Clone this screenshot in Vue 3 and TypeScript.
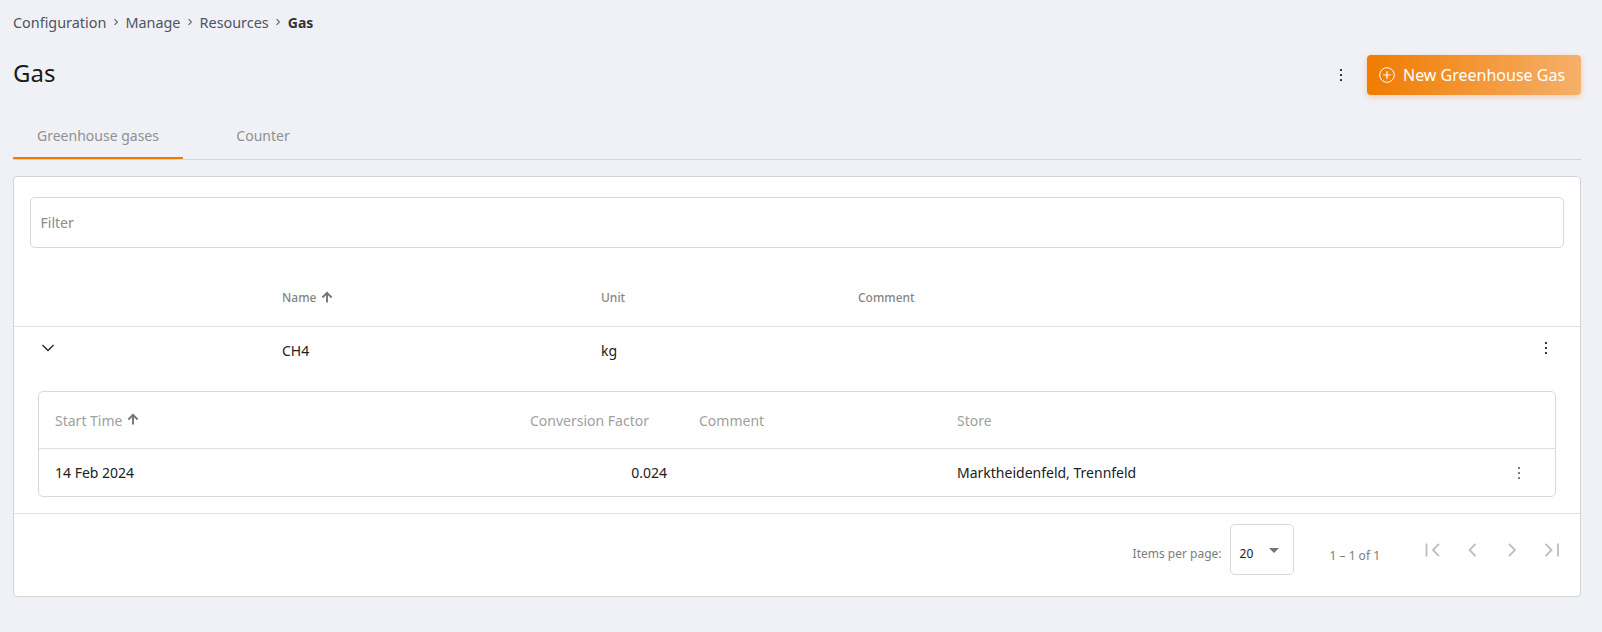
<script setup lang="ts">
const crumbs: string[] = ['Configuration', 'Manage', 'Resources']
</script>

<template>
  <div class="page">
    <nav class="crumbs">
      <template v-for="c in crumbs" :key="c">
        <span>{{ c }}</span>
        <svg class="sep" width="12" height="12" viewBox="0 0 12 12"><path d="M4.6 3.2 7.4 6 4.6 8.8" fill="none" stroke="#5f6368" stroke-width="1.1" /></svg>
      </template>
      <b>Gas</b>
    </nav>

    <header class="head">
      <h1>Gas</h1>
      <div class="actions">
        <svg class="kebab" width="4" height="12" viewBox="0 0 4 12"><g fill="#2b2b2b"><rect x="1" y="0" width="2" height="2" rx=".5" /><rect x="1" y="5" width="2" height="2" rx=".5" /><rect x="1" y="10" width="2" height="2" rx=".5" /></g></svg>
        <button class="new">
          <svg width="16" height="16" viewBox="0 0 16 16" fill="none" stroke="#fff" stroke-width="1"><circle cx="8" cy="8" r="7.3" /><path d="M8 4.2v7.6M4.2 8h7.6" stroke-width="1.2" /></svg>
          <span>New Greenhouse Gas</span>
        </button>
      </div>
    </header>

    <div class="tabs">
      <div class="tab active">Greenhouse gases</div>
      <div class="tab">Counter</div>
    </div>

    <section class="card">
      <div class="filter-wrap"><div class="filter">Filter</div></div>

      <div class="row thead">
        <div class="c-exp"></div>
        <div class="c-name">Name
          <svg class="sort" width="12" height="12" viewBox="0 0 12 12"><path d="M6 11.5V2M1.4 6.5 6 1.9l4.6 4.6" fill="none" stroke="#757575" stroke-width="1.9" /></svg>
        </div>
        <div class="c-unit">Unit</div>
        <div class="c-comment">Comment</div>
      </div>

      <div class="row tbody">
        <div class="c-exp"><svg class="chev" width="14" height="8" viewBox="0 0 14 8"><path d="M1.5 1 7 6.5 12.5 1" fill="none" stroke="#222" stroke-width="1.3" /></svg></div>
        <div class="c-name">CH4</div>
        <div class="c-unit">kg</div>
        <div class="c-comment"></div>
        <svg class="kebab row-menu" width="4" height="12" viewBox="0 0 4 12"><g fill="#2b2b2b"><rect x="1" y="0" width="2" height="2" rx=".5" /><rect x="1" y="5" width="2" height="2" rx=".5" /><rect x="1" y="10" width="2" height="2" rx=".5" /></g></svg>
      </div>

      <div class="detail-wrap">
        <div class="detail">
          <div class="drow dhead">
            <div class="d-start">Start Time
              <svg class="sort" width="12" height="12" viewBox="0 0 12 12"><path d="M6 11.5V2M1.4 6.5 6 1.9l4.6 4.6" fill="none" stroke="#757575" stroke-width="1.9" /></svg>
            </div>
            <div class="d-factor">Conversion Factor</div>
            <div class="d-comment">Comment</div>
            <div class="d-store">Store</div>
          </div>
          <div class="drow dbody">
            <div class="d-start">14 Feb 2024</div>
            <div class="d-factor val">0.024</div>
            <div class="d-comment"></div>
            <div class="d-store">Marktheidenfeld, Trennfeld</div>
            <svg class="kebab d-menu" width="4" height="12" viewBox="0 0 4 12"><g fill="#757575"><rect x="1" y="0" width="2" height="2" rx=".5" /><rect x="1" y="5" width="2" height="2" rx=".5" /><rect x="1" y="10" width="2" height="2" rx=".5" /></g></svg>
          </div>
        </div>
      </div>

      <footer class="pager">
        <span class="ipp">Items per page:</span>
        <div class="select"><span>20</span><i class="caret"></i></div>
        <span class="range">1 – 1 of 1</span>
        <div class="nav">
          <svg width="16" height="16" viewBox="0 0 16 16"><path d="M2.5 1.5v13M15 1.8 9 8l6 6.2" fill="none" stroke="#bdbdbd" stroke-width="1.8" /></svg>
          <svg width="16" height="16" viewBox="0 0 16 16"><path d="M11.5 1.8 5.5 8l6 6.2" fill="none" stroke="#bdbdbd" stroke-width="1.8" /></svg>
          <svg width="16" height="16" viewBox="0 0 16 16"><path d="M5 1.8 11 8l-6 6.2" fill="none" stroke="#bdbdbd" stroke-width="1.8" /></svg>
          <svg width="16" height="16" viewBox="0 0 16 16"><path d="M1.5 1.8 7.5 8l-6 6.2M14 1.5v13" fill="none" stroke="#bdbdbd" stroke-width="1.8" /></svg>
        </div>
      </footer>
    </section>
  </div>
</template>

<style>
html, body { margin: 0; background: #f0f1f7; }
</style>

<style scoped>
* { box-sizing: border-box; }
.page {
  width: 1602px;
  height: 632px;
  overflow: hidden;
  padding: 0 21px 0 13px;
  background: #f0f1f7;
  font-family: "Noto Sans", sans-serif;
  font-size: 14px;
  color: #212121;
}
.crumbs {
  display: flex;
  align-items: center;
  height: 44px;
  color: #4d5361;
  font-size: 14.4px;
}
.crumbs .sep { margin: 0 3.7px 0 3.4px; }
.crumbs b { font-weight: 700; color: #333; font-size: 14px; }
.head {
  display: flex;
  align-items: center;
  justify-content: space-between;
  height: 57px;
}
.head h1 {
  margin: 0;
  font-size: 24px;
  font-weight: 400;
  color: #1c1c1c;
}
.actions { display: flex; align-items: center; gap: 24px; padding-top: 5px; }
.kebab { display: block; }
.new {
  display: flex;
  align-items: center;
  gap: 8px;
  width: 214px;
  height: 40px;
  padding: 0 0 0 12px;
  border: 0;
  border-radius: 4px;
  background: linear-gradient(90deg, #f07c00, #f6b06a);
  color: #fff;
  font: 400 16px "Noto Sans", sans-serif;
  box-shadow: 0 2px 6px rgba(240, 124, 0, .3);
}
.tabs {
  display: flex;
  height: 59px;
  padding-top: 10px;
  border-bottom: 1px solid #d3d4da;
}
.tab {
  display: flex;
  align-items: center;
  justify-content: center;
  height: 48px;
  width: 170px;
  padding-top: 2px;
  border-bottom: 2px solid transparent;
  color: #909090;
  font-size: 14px;
}
.tab.active { border-bottom-color: #f07c00; }
.tab:not(.active) { width: 160px; }
.card {
  margin-top: 16px;
  height: 421px;
  background: #fff;
  border: 1px solid #d3d4da;
  border-radius: 4px;
}
.filter-wrap { padding: 20px 16px 0; }
.filter {
  height: 51px;
  display: flex;
  align-items: center;
  padding-left: 9.5px;
  border: 1px solid #d9d9d9;
  border-radius: 5px;
  color: #8a8a8a;
  font-size: 14px;
}
.row { position: relative; display: flex; }
.thead {
  margin-top: 21px;
  height: 58px;
  align-items: center;
  border-bottom: 1px solid #e0e0e0;
  color: #858585;
  font-size: 12px;
  font-weight: 500;
}
.sort { margin-bottom: 2px; }
.c-exp { width: 268px; padding-left: 27px; }
.c-name { width: 319px; display: flex; align-items: center; gap: 5px; align-self: flex-start; }
.thead .c-name { align-self: center; }
.c-unit { width: 257px; }
.c-comment { flex: 1; }
.tbody { height: 64px; padding-top: 14px; font-size: 14px; }
.tbody .c-exp { padding-top: 3px; }
.chev { display: block; }
.row-menu { position: absolute; right: 32px; top: 15px; }
.detail-wrap { padding: 0 24px 16px; }
.detail {
  border: 1px solid #d9d9d9;
  border-radius: 5px;
}
.drow { position: relative; display: flex; align-items: center; }
.dhead { height: 57px; border-bottom: 1px solid #e0e0e0; color: #a0a0a0; }
.dbody { height: 47px; color: #212121; }
.d-start { width: 475px; padding-left: 16px; display: flex; align-items: center; gap: 5px; flex: none; }
.d-factor { width: 135px; text-align: right; white-space: nowrap; flex: none; }
.d-factor.val { transform: translateX(18px); }
.d-comment { width: 258px; margin-left: 50px; flex: none; }
.d-store { flex: 1; }
.d-menu { position: absolute; right: 34px; top: 18px; }
.pager {
  display: flex;
  align-items: flex-start;
  justify-content: flex-end;
  border-top: 1px solid #e0e0e0;
  padding: 10px 20px 0 0;
  font-size: 12px;
  color: #7d7d7d;
}
.ipp { margin: 21px 8px 0 0; }
.select {
  position: relative;
  display: flex;
  align-items: center;
  width: 64px;
  height: 51px;
  padding: 8px 0 0 9px;
  border: 1px solid #d9d9d9;
  border-radius: 5px;
  color: #212121;
}
.caret {
  position: absolute;
  left: 38px;
  top: 23px;
  border-left: 5px solid transparent;
  border-right: 5px solid transparent;
  border-top: 5px solid #757575;
}
.range { margin: 23px 44px 0 36px; }
.nav { display: flex; gap: 24px; margin-top: 18px; }
.nav svg { display: block; }
</style>
